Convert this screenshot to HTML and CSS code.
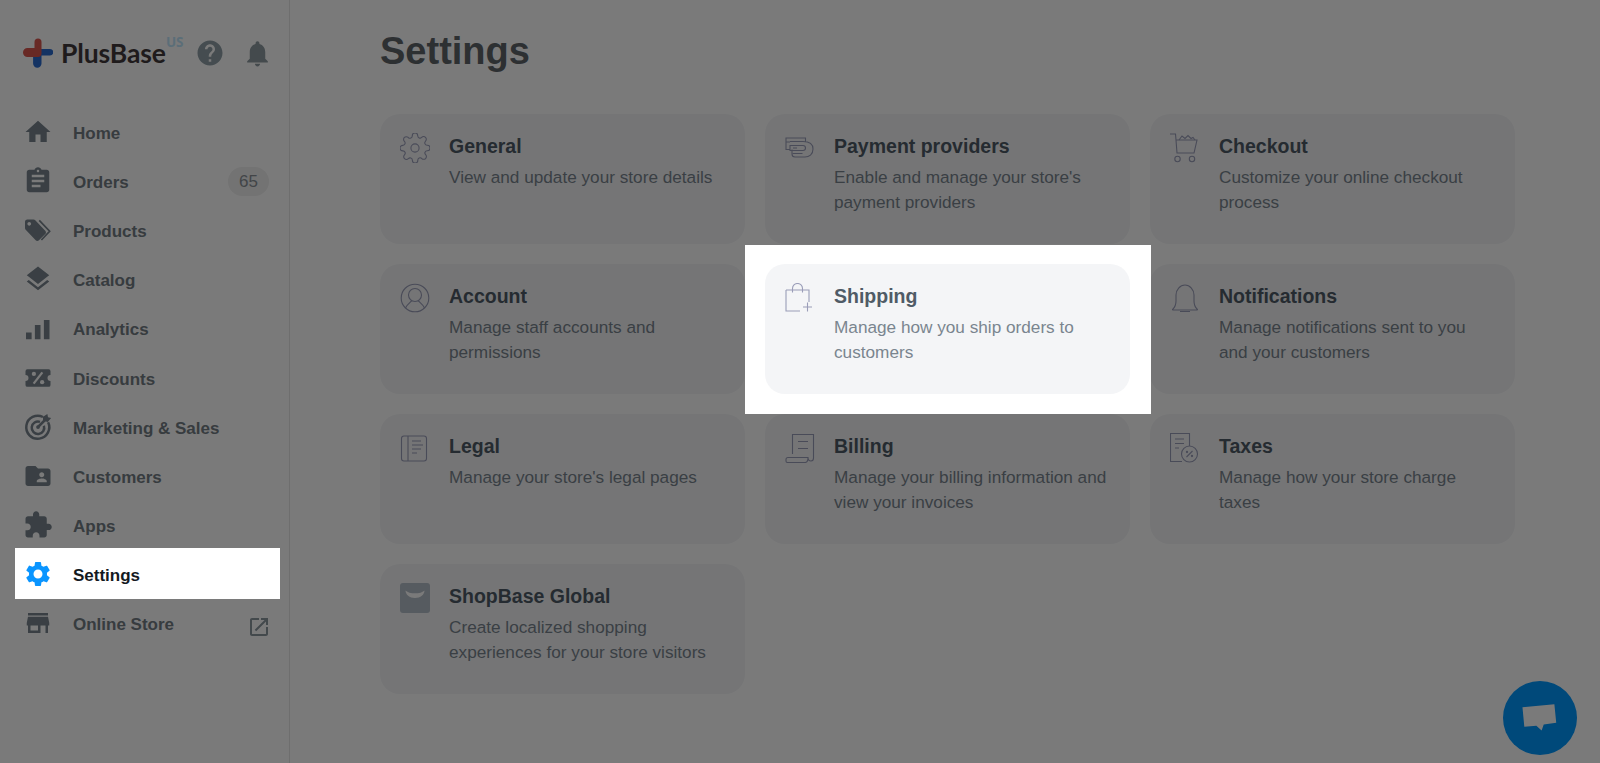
FILE: index.html
```html
<!DOCTYPE html>
<html lang="en">
<head>
<meta charset="utf-8">
<title>Settings</title>
<link rel="stylesheet" href="styles.css">
</head>
<body>
<div class="app">
  <aside class="sidebar">
    <div class="brand">
      <svg class="brand-mark" viewBox="0 0 30 30"><path class="mark-blue" d="M12 11h15a3.200 3.200 0 0 1 0 6.500H18.500V25.500a4.200 4.200 0 0 1-8.400 0V17z"/><path class="mark-red" d="M11.500 4a3.500 3.500 0 0 1 7 0v11.500c0 2-1.500 3.500-3.500 3.500H4.500a4.500 4.500 0 0 1 0-9h7z"/></svg>
      <span class="brand-name">PlusBase</span>
      <span class="brand-region">US</span>
      <svg class="top-icon help" viewBox="0 0 24 24"><path d="M12 2C6.480 2 2 6.480 2 12s4.480 10 10 10 10-4.480 10-10S17.520 2 12 2zm1 17h-2v-2h2v2zm2.070-7.750l-.9.920C13.450 12.900 13 13.500 13 15h-2v-.5c0-1.100.450-2.100 1.170-2.830l1.240-1.260c.370-.360.590-.860.590-1.410 0-1.100-.9-2-2-2s-2 .9-2 2H8c0-2.210 1.790-4 4-4s4 1.790 4 4c0 .880-.360 1.680-.930 2.250z"/></svg>
      <svg class="top-icon bell" viewBox="0 0 24 24"><path d="M12 22c1.100 0 2-.9 2-2h-4c0 1.100.890 2 2 2zm6-6v-5c0-3.070-1.640-5.640-4.500-6.320V4c0-.830-.670-1.500-1.500-1.500s-1.500.670-1.500 1.500v.680C7.630 5.360 6 7.920 6 11v5l-2 2v1h16v-1l-2-2z"/></svg>
    </div>
    <nav class="nav">
      <a class="nav-item"><svg class="nav-icon" viewBox="0 0 24 24"><path d="M10 20v-6h4v6h5v-8h3L12 3 2 12h3v8z"/></svg><span class="nav-label">Home</span></a>
      <a class="nav-item"><svg class="nav-icon" viewBox="0 0 24 24"><path d="M19 3h-4.180C14.400 1.840 13.300 1 12 1c-1.300 0-2.400.840-2.820 2H5c-1.100 0-2 .9-2 2v14c0 1.100.9 2 2 2h14c1.100 0 2-.9 2-2V5c0-1.100-.9-2-2-2zm-7 0c.550 0 1 .450 1 1s-.450 1-1 1-1-.450-1-1 .450-1 1-1zm2 14H7v-2h7v2zm3-4H7v-2h10v2zm0-4H7V7h10v2z"/></svg><span class="nav-label">Orders</span><span class="badge">65</span></a>
      <a class="nav-item"><svg class="nav-icon" viewBox="0 0 24 24"><path d="M17.800 12.600l-8-8.400C9.450 3.800 9 3.600 8.500 3.600H3.400c-1 0-1.800.800-1.800 1.800v5c0 .5.200 1 .55 1.350l8 8.400c.350.350.800.550 1.300.550s.950-.2 1.300-.550l5.050-4.950c.350-.350.550-.800.550-1.300s-.2-.950-.550-1.300zM5 8.500c-.830 0-1.500-.670-1.500-1.500s.670-1.500 1.500-1.500 1.500.670 1.500 1.500-.670 1.500-1.500 1.500z"/><path class="chevron" d="M13 4.300l8.300 8.700-6.600 7"/></svg><span class="nav-label">Products</span></a>
      <a class="nav-item"><svg class="nav-icon" viewBox="0 0 24 24"><path d="M11.990 18.540l-7.370-5.730L3 14.070l9 7 9-7-1.630-1.270-7.380 5.740zM12 16l7.360-5.730L21 9l-9-7-9 7 1.630 1.270L12 16z"/></svg><span class="nav-label">Catalog</span></a>
      <a class="nav-item"><svg class="nav-icon" viewBox="0 0 24 24"><path d="M2.400 15.500h4.500v5.500H2.400zM9.500 9.500H14V21H9.500zM16.700 5.500h4.500V21h-4.500z"/></svg><span class="nav-label">Analytics</span></a>
      <a class="nav-item"><svg class="nav-icon" viewBox="0 0 24 24"><path d="M3.500 5h17A1.500 1.500 0 0 1 22 6.500V9.600a2.400 2.400 0 0 0 0 4.800v3.100a1.500 1.500 0 0 1-1.500 1.500h-17A1.500 1.500 0 0 1 2 17.500v-3.100a2.400 2.400 0 0 0 0-4.800V6.500A1.500 1.500 0 0 1 3.500 5z"/><path class="ticket-cut" d="M15.500 7.500l-7 9"/><circle class="ticket-dot" cx="8.700" cy="8.700" r="1.700"/><circle class="ticket-dot" cx="15.300" cy="15.300" r="1.700"/></svg><span class="nav-label">Discounts</span></a>
      <a class="nav-item"><svg class="nav-icon" viewBox="0 0 24 24"><path class="ring" d="M16 4a9.200 9.200 0 1 0 4.100 4.200"/><path class="ring" d="M13.600 7.900a5 5 0 1 0 3.100 3.100"/><path class="ring" d="M12 12l6-6"/><path d="M16 7V3.800L19.500 1.500 20 4.200l2.500.5L19.800 8z"/><circle cx="12" cy="12" r="1.500"/></svg><span class="nav-label">Marketing &amp; Sales</span></a>
      <a class="nav-item"><svg class="nav-icon" viewBox="0 0 24 24"><path d="M20 6h-8l-2-2H4c-1.100 0-1.990.9-1.990 2L2 18c0 1.100.9 2 2 2h16c1.100 0 2-.9 2-2V8c0-1.100-.9-2-2-2zm-5 3c1.100 0 2 .9 2 2s-.9 2-2 2-2-.9-2-2 .9-2 2-2zm4 8h-8v-1c0-1.330 2.670-2 4-2s4 .670 4 2v1z"/></svg><span class="nav-label">Customers</span></a>
      <a class="nav-item"><svg class="nav-icon" viewBox="0 0 24 24"><path d="M20.500 11H19V7c0-1.100-.9-2-2-2h-4V3.500C13 2.120 11.880 1 10.500 1S8 2.120 8 3.500V5H4c-1.100 0-1.990.9-1.990 2v3.800H3.500c1.490 0 2.700 1.210 2.700 2.700s-1.210 2.700-2.700 2.700H2V20c0 1.100.9 2 2 2h3.800v-1.500c0-1.490 1.210-2.700 2.700-2.700 1.490 0 2.700 1.210 2.700 2.700V22H17c1.100 0 2-.9 2-2v-4h1.500c1.380 0 2.500-1.120 2.500-2.500S21.880 11 20.500 11z"/></svg><span class="nav-label">Apps</span></a>
      <a class="nav-item active"><svg class="nav-icon" viewBox="0 0 24 24"><path d="M19.140 12.940c.040-.3.060-.610.060-.940 0-.320-.020-.640-.070-.940l2.030-1.580c.180-.140.230-.410.120-.610l-1.920-3.320c-.120-.220-.370-.290-.590-.220l-2.390.960c-.5-.380-1.030-.7-1.620-.940l-.360-2.540c-.040-.240-.240-.410-.480-.410h-3.840c-.240 0-.430.170-.470.410l-.360 2.540c-.590.240-1.130.570-1.620.940l-2.390-.960c-.220-.080-.470 0-.590.220L2.740 8.870c-.120.210-.080.470.120.610l2.030 1.580c-.050.3-.090.630-.090.940s.020.640.070.940l-2.030 1.580c-.180.140-.230.410-.120.610l1.920 3.320c.120.220.370.290.590.220l2.390-.960c.5.380 1.030.7 1.620.94l.360 2.540c.050.240.240.410.480.410h3.840c.240 0 .440-.17.470-.41l.360-2.540c.590-.240 1.130-.560 1.620-.94l2.390.96c.220.080.470 0 .590-.22l1.920-3.320c.120-.220.070-.470-.120-.610l-2.010-1.580zM12 15.600c-1.980 0-3.600-1.620-3.600-3.600s1.620-3.600 3.600-3.600 3.600 1.620 3.600 3.600-1.620 3.600-3.600 3.600z"/></svg><span class="nav-label">Settings</span></a>
      <a class="nav-item"><svg class="nav-icon" viewBox="0 0 24 24"><path d="M20 4H4v2h16V4zm1 10v-2l-1-5H4l-1 5v2h1v6h10v-6h4v6h2v-6h1zm-9 4H6v-4h6v4z"/></svg><span class="nav-label">Online Store</span><svg class="external" viewBox="0 0 24 24"><path d="M19 19H5V5h7V3H5c-1.110 0-2 .9-2 2v14c0 1.100.890 2 2 2h14c1.100 0 2-.9 2-2v-7h-2v7zM14 3v2h3.590l-9.830 9.830 1.410 1.410L19 6.410V10h2V3h-7z"/></svg></a>
    </nav>
  </aside>
  <main class="main">
    <h1 class="page-title">Settings</h1>
    <section class="cards">
      <article class="card">
        <svg class="card-icon gear" viewBox="1 1 22 22"><circle cx="12" cy="12" r="3"/><path d="M19.400 15a1.650 1.650 0 0 0 .330 1.820l.060.060a2 2 0 0 1 0 2.830 2 2 0 0 1-2.830 0l-.060-.060a1.650 1.650 0 0 0-1.820-.330 1.650 1.650 0 0 0-1 1.510V21a2 2 0 0 1-2 2 2 2 0 0 1-2-2v-.090A1.650 1.650 0 0 0 9 19.400a1.650 1.650 0 0 0-1.820.330l-.060.060a2 2 0 0 1-2.830 0 2 2 0 0 1 0-2.830l.060-.060a1.650 1.650 0 0 0 .330-1.820 1.650 1.650 0 0 0-1.510-1H3a2 2 0 0 1-2-2 2 2 0 0 1 2-2h.090A1.650 1.650 0 0 0 4.600 9a1.650 1.650 0 0 0-.330-1.820l-.060-.060a2 2 0 0 1 0-2.830 2 2 0 0 1 2.830 0l.060.060a1.650 1.650 0 0 0 1.820.330H9a1.650 1.650 0 0 0 1-1.510V3a2 2 0 0 1 2-2 2 2 0 0 1 2 2v.090a1.650 1.650 0 0 0 1 1.510 1.650 1.650 0 0 0 1.820-.330l.060-.060a2 2 0 0 1 2.830 0 2 2 0 0 1 0 2.830l-.060.060a1.650 1.650 0 0 0-.330 1.820V9a1.650 1.650 0 0 0 1.510 1H21a2 2 0 0 1 2 2 2 2 0 0 1-2 2h-.090a1.650 1.650 0 0 0-1.510 1z"/></svg>
        <div class="card-text"><h2 class="card-title">General</h2><p class="card-desc">View and update your store details</p></div>
      </article>
      <article class="card">
        <svg class="card-icon" viewBox="0 0 30 30"><path d="M20.500 8.500V5H1v11.500h4M1 9h4M5 8.500h13c5 0 10 2 10 7.500s-4 8-8 8H10c-2 0-3-1-3-3v-4.500"/><path d="M5 12.500h13c1.500 0 2.500 1 2.500 2.500s-1 2.500-2.500 2.500H5zM8 15h4M7.500 20.500h10"/></svg>
        <div class="card-text"><h2 class="card-title">Payment providers</h2><p class="card-desc">Enable and manage your store's payment providers</p></div>
      </article>
      <article class="card">
        <svg class="card-icon" viewBox="0 0 30 30"><path d="M0 1h5.500l.5 6h21l-3 13H7L6 7"/><path d="M9 7l3-4 3 2.500 3-3 3 3 2-1 2 2.500"/><circle cx="7.500" cy="26" r="2.700"/><circle cx="22" cy="26" r="2.700"/></svg>
        <div class="card-text"><h2 class="card-title">Checkout</h2><p class="card-desc">Customize your online checkout process</p></div>
      </article>
      <article class="card">
        <svg class="card-icon" viewBox="0 0 30 30"><circle cx="15" cy="15" r="13.800"/><circle cx="15" cy="12" r="6.500"/><path d="M5.500 25c1-3 4-5 6.500-7.500M24.500 25c-1-3-4-5-6.500-7.500"/></svg>
        <div class="card-text"><h2 class="card-title">Account</h2><p class="card-desc">Manage staff accounts and permissions</p></div>
      </article>
      <article class="card spotlight">
        <svg class="card-icon" viewBox="0 0 30 30"><path d="M1 7h23v12M1 7v21h14M7.500 9.500V5.500a5 5 0 0 1 10 0v4M18 24h9M22.500 19.500v9"/></svg>
        <div class="card-text"><h2 class="card-title">Shipping</h2><p class="card-desc">Manage how you ship orders to customers</p></div>
      </article>
      <article class="card">
        <svg class="card-icon" viewBox="0 0 30 30"><path d="M3 26c1-1 3-3 3-8v-6c0-5 4-10 9-10s9 5 9 10v6c0 5 2 7 3 8a.5.5 0 0 1 0 1H3a.5.5 0 0 1 0-1zM10 28.500h10"/></svg>
        <div class="card-text"><h2 class="card-title">Notifications</h2><p class="card-desc">Manage notifications sent to you and your customers</p></div>
      </article>
      <article class="card">
        <svg class="card-icon" viewBox="0 0 30 30"><rect x="1.500" y="3" width="25" height="25" rx="2.500"/><path d="M8 3v25M12 8h9M12 12h11M12 16h9M12 20h5"/></svg>
        <div class="card-text"><h2 class="card-title">Legal</h2><p class="card-desc">Manage your store's legal pages</p></div>
      </article>
      <article class="card">
        <svg class="card-icon" viewBox="0 0 30 30"><path d="M7.500 21V1.500h21V25c0 2-1 3-2.500 3S23 27 23 24.500H3c-1.500 0-2 1-2 2V28c0 1 .5 1.500 1.500 1.500H20c1.500 0 3-1 3-5M13 8.500h10M13 15.500h10"/></svg>
        <div class="card-text"><h2 class="card-title">Billing</h2><p class="card-desc">Manage your billing information and view your invoices</p></div>
      </article>
      <article class="card">
        <svg class="card-icon" viewBox="0 0 30 30"><path d="M12 28.500H.5V.5h19v12.500M5 6h9M5 10.500h9M5 15h4"/><circle cx="19.500" cy="21" r="8"/><path d="M22.500 18l-6 6"/><circle cx="17" cy="19" r=".6"/><circle cx="22" cy="23" r=".6"/></svg>
        <div class="card-text"><h2 class="card-title">Taxes</h2><p class="card-desc">Manage how your store charge taxes</p></div>
      </article>
      <article class="card">
        <svg class="card-icon solid" viewBox="0 0 30 30"><rect width="30" height="30" rx="3"/><path class="smile" d="M5.500 7.500c1.500 1 2.500 1.800 4 2.200 3.300.8 7.700.8 11 0 1.500-.4 2.500-1.200 4-2.200 0 4-4 7.500-9.500 7.500S5.500 11.500 5.500 7.500z"/></svg>
        <div class="card-text"><h2 class="card-title">ShopBase Global</h2><p class="card-desc">Create localized shopping experiences for your store visitors</p></div>
      </article>
    </section>
  </main>
</div>
<button class="chat" aria-label="Chat"><svg viewBox="0 0 40 30"><path d="M.500 3.500L35 0l2 20-13.500 2-2.300 6.500-5.700-5L2.500 24.500z"/></svg></button>
<div class="overlay"></div>
</body>
</html>
```
FILE: styles.css
```css
* { box-sizing: border-box; }
html, body { margin: 0; height: 100%; }
body {
  background: #fff;
  font-family: "Liberation Sans", Arial, sans-serif;
  overflow: hidden;
}
.app { display: flex; height: 763px; }

/* Sidebar */
.sidebar {
  flex: 0 0 290px;
  border-right: 1px solid #e5e5e5;
  padding-top: 32px;
}
.brand {
  display: flex;
  align-items: center;
  height: 42px;
  padding: 0 16px 0 23px;
}
.brand-mark { width: 30px; height: 30px; flex: none; }
.mark-red { fill: #d9564e; }
.mark-blue { fill: #2a6bd0; }
.brand-name {
  margin-left: 8px;
  font-family: Lato, "Liberation Sans", sans-serif;
  font-weight: 700;
  font-size: 26.500px;
  letter-spacing: -.1px;
  color: #423a3c;
}
.brand-region {
  align-self: flex-start;
  margin: 1px auto 0 0;
  font-family: "Open Sans", sans-serif;
  font-size: 13.500px;
  line-height: 18px;
  font-weight: 700;
  color: #bfe6fa;
}
.top-icon { flex: none; }
.help { width: 30px; height: 30px; fill: #90a0a8; }
.bell { width: 31px; height: 31px; margin-left: 17px; fill: #8f9ba1; }

.nav { margin-top: 35px; }
.nav-item {
  display: flex;
  align-items: center;
  height: 49.200px;
  padding: 0 25px 0 23px;
  position: relative;
  color: #747d85;
}
.nav-icon {
  width: 30px;
  height: 30px;
  flex: none;
  margin-top: -4px;
  fill: #79858e;
}
.nav-label {
  margin-left: 20px;
  font-size: 17px;
  font-weight: 700;
}
.chevron { fill: none; stroke: #79858e; stroke-width: 1.400; }
.ticket-cut { stroke: #fff; stroke-width: 1.800; fill: none; }
.ticket-dot { fill: #fff; }
.ring { fill: none; stroke: #79858e; stroke-width: 2; }
.badge {
  margin-left: auto;
  width: 41px;
  height: 29px;
  margin-right: -5px;
  margin-top: -2px;
  border-radius: 15px;
  background: #f0f0f0;
  color: #8a9097;
  font-size: 17px;
  line-height: 29px;
  text-align: center;
}
.external { width: 24px; height: 24px; margin-left: auto; margin-right: -7px; margin-top: 4px; fill: #8d98a0; }

.active { z-index: 20; }
.active::before {
  content: "";
  position: absolute;
  left: 15px;
  right: 9px;
  top: -4px;
  bottom: 2px;
  background: #fff;
  z-index: -1;
}
.active .nav-icon { fill: #0a95ff; }
.active .nav-label { color: #141a1f; }

/* Main */
.main { flex: 1; padding-left: 90px; }
.page-title {
  margin: 29px 0 0;
  height: 44px;
  font-size: 38px;
  line-height: 44px;
  font-weight: 700;
  color: #5e646a;
}
.cards {
  margin-top: 41.300px;
  width: 1135px;
  display: grid;
  grid-template-columns: repeat(3, 1fr);
  grid-auto-rows: 130px;
  gap: 20px;
}
.card {
  display: flex;
  padding: 19px 20px;
  background: #f4f5f7;
  border-radius: 20px;
  position: relative;
}
.card-icon {
  width: 30px;
  height: 30px;
  flex: none;
  fill: none;
  stroke: #9a9db8;
  stroke-width: 1.100;
}
.gear { stroke-width: .8; }
.card-icon.solid { fill: #b4bec8; stroke: none; }
.smile { fill: #fff; }
.card-text { margin-left: 19px; }
.card-title {
  margin: 0;
  font-size: 19.500px;
  line-height: 26px;
  font-weight: 700;
  color: #4f5b66;
}
.card-desc {
  margin: 6px 0 0;
  font-size: 17.200px;
  line-height: 24.200px;
  color: #7a858f;
}
.spotlight { z-index: 20; }
.spotlight::before {
  content: "";
  position: absolute;
  inset: -19.600px -21px -20px -20px;
  background: #fff;
  z-index: -2;
}
.spotlight::after {
  content: "";
  position: absolute;
  inset: 0;
  background: #f4f5f7;
  border-radius: 20px;
  z-index: -1;
}

/* Chat widget and tour dimmer */
.chat {
  position: fixed;
  right: 23px;
  bottom: 8px;
  width: 74px;
  height: 74px;
  padding: 0;
  border: 0;
  border-radius: 50%;
  background: #0098ff;
  display: flex;
  align-items: center;
  justify-content: center;
}
.chat svg { width: 37px; height: 30px; fill: #fff; }
.overlay {
  position: fixed;
  inset: 0;
  background: rgba(0, 0, 0, .52);
  z-index: 10;
}
```
